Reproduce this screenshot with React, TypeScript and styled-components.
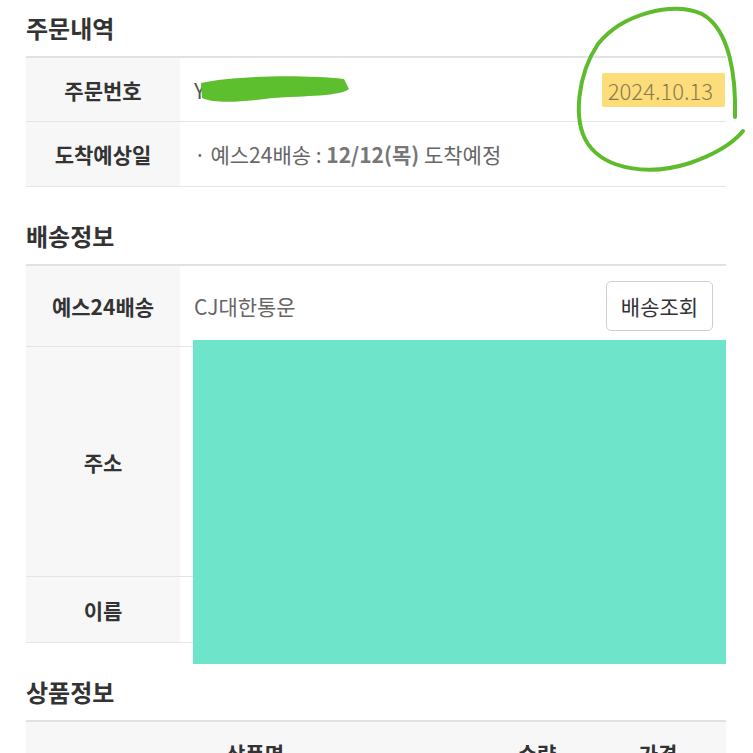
import styled, { createGlobalStyle } from 'styled-components'

const GlobalStyle = createGlobalStyle`
  html, body {
    margin: 0;
    padding: 0;
    background: #fff;
  }
  body {
    font-family: "Noto Sans CJK KR", "Noto Sans", sans-serif;
    color: #333;
  }
`

const Page = styled.div`
  position: relative;
  padding: 12px 27px 0 26px;
  width: 753px;
  height: 753px;
  box-sizing: border-box;
  overflow: hidden;
`

const Section = styled.section`
  margin-bottom: 33px;
`

const Title = styled.h2`
  margin: 0 0 12px;
  font-size: 24px;
  line-height: 32px;
  font-weight: 700;
  color: #333;
`

const Table = styled.div`
  position: relative;
  border-top: 2px solid #e2e2e2;
`

const Row = styled.div<{ height: number }>`
  display: grid;
  grid-template-columns: 154px 1fr;
  height: ${({ height }) => height}px;
  border-bottom: 1px solid #e4e4e4;
  box-sizing: border-box;
`

const Label = styled.div`
  display: flex;
  align-items: center;
  justify-content: center;
  background: #f7f7f7;
  font-size: 21px;
  font-weight: 700;
  color: #333;
`

const Value = styled.div`
  display: flex;
  align-items: center;
  justify-content: space-between;
  padding: 0 13px 0 14px;
  font-size: 21px;
  color: #666;
`

const Strong = styled.b`
  font-weight: 700;
  color: #777;
`

const OrderNo = styled.span`
  color: #555;
`

const DateMark = styled.span`
  padding: 1px 12px 1px 6px;
  margin-right: -12px;
  background: rgba(252, 206, 70, 0.72);
  border-radius: 2px;
  color: #877a52;
  font-size: 22px;
  font-weight: 300;
`

const TrackButton = styled.button`
  width: 107px;
  height: 50px;
  padding: 0;
  border: 1px solid #cfcfcf;
  border-radius: 5px;
  background: #fff;
  font-family: inherit;
  font-size: 21px;
  color: #333;
`

const Redaction = styled.div`
  position: absolute;
  left: 167px;
  top: 74px;
  width: 533px;
  height: 324px;
  background: #6ee5cb;
`

const HeadRow = styled.div`
  display: grid;
  grid-template-columns: 458px 106px 1fr;
  height: 62px;
  background: #f7f7f7;
`

const HeadCell = styled.div`
  display: flex;
  align-items: center;
  justify-content: center;
  font-size: 21px;
  font-weight: 700;
  color: #333;
`

const Annotation = styled.svg`
  position: absolute;
  left: 0;
  top: 0;
  pointer-events: none;
`

export default function App() {
  return (
    <>
      <GlobalStyle />
      <Page>
        <Section>
          <Title>주문내역</Title>
          <Table>
            <Row height={64}>
              <Label>주문번호</Label>
              <Value>
                <OrderNo>Y</OrderNo>
                <DateMark>2024.10.13</DateMark>
              </Value>
            </Row>
            <Row height={65}>
              <Label>도착예상일</Label>
              <Value>
                <span>
                  · 예스24배송 : <Strong>12/12(목)</Strong> 도착예정
                </span>
              </Value>
            </Row>
          </Table>
        </Section>

        <Section>
          <Title>배송정보</Title>
          <Table>
            <Row height={81}>
              <Label>예스24배송</Label>
              <Value>
                <span>CJ대한통운</span>
                <TrackButton>배송조회</TrackButton>
              </Value>
            </Row>
            <Row height={230}>
              <Label>주소</Label>
              <Value />
            </Row>
            <Row height={66}>
              <Label>이름</Label>
              <Value />
            </Row>
            <Redaction />
          </Table>
        </Section>

        <Section>
          <Title>상품정보</Title>
          <Table>
            <HeadRow>
              <HeadCell>상품명</HeadCell>
              <HeadCell>수량</HeadCell>
              <HeadCell>가격</HeadCell>
            </HeadRow>
          </Table>
        </Section>

        <Annotation width="753" height="753" viewBox="0 0 753 753">
          <path
            d="M201 83 C232 76 300 74 344 79 L349 89 C342 96 305 96 272 98 C242 102 216 104 202 98 Z"
            fill="#5dbf2e"
          />
          <path
            d="M735 117 C736 80 731 30 702 14 C672 1 622 14 598 44 C578 74 572 120 588 144 C606 170 650 176 690 163 C716 154 734 142 743 131"
            fill="none"
            stroke="#5dbb2c"
            strokeWidth="4"
            strokeLinecap="round"
          />
        </Annotation>
      </Page>
    </>
  )
}
